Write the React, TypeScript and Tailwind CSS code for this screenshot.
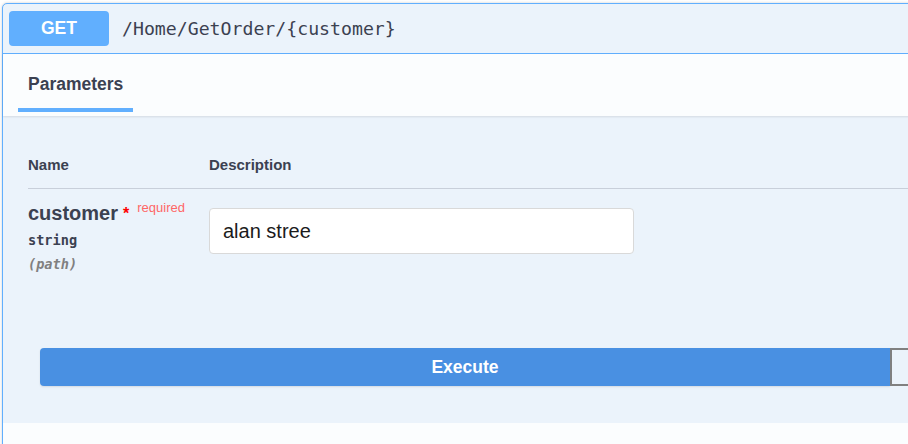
const sans = { fontFamily: '"Liberation Sans", Arial, sans-serif' }

export default function App() {
  return (
    <div className="w-[908px] h-[444px] overflow-hidden bg-white font-['Liberation_Sans',Arial,sans-serif]">
      <div className="ml-[2px] mt-[3px] w-[1000px] rounded-tl-[5px] border border-[#61affe] bg-[#ebf3fb] shadow-[0_0_3px_rgba(0,0,0,0.19)]">
        {/* Summary */}
        <div className="flex h-[50px] items-center border-b border-[#61affe] px-[6px]">
          <div className="flex h-[35px] w-[100px] items-center justify-center rounded-[4px] bg-[#61affe] text-[17.5px] font-bold text-white">
            GET
          </div>
          <span className="ml-[13px] font-['DejaVu_Sans_Mono',monospace] text-[18.2px] text-[#3b4151]">
            /Home/GetOrder/{'{customer}'}
          </span>
        </div>

        {/* Tab header */}
        <div className="relative h-[62px] bg-[#fbfdfe] px-[15px] shadow-[0_1px_2px_rgba(0,0,0,0.1)]">
          <div className="flex w-[115px] flex-col pt-[20px]">
            <span className="pl-[10px] text-[17.5px] leading-[20px] font-bold text-[#3b4151]">Parameters</span>
            <div className="mt-[14px] h-[4px] bg-[#61affe]" />
          </div>
        </div>

        {/* Parameters table */}
        <div className="pt-[40px] pl-[25px] text-[#3b4151]">
          <div className="flex h-[33px] border-b border-[#c8cfda] text-[15px] leading-[18px] font-bold">
            <div className="w-[181px]">Name</div>
            <div>Description</div>
          </div>
          <div className="flex h-[100px]">
            <div className="w-[181px] pt-[12px]">
              <div className="flex items-start">
                <span className="text-[20px] leading-[24px] font-bold">customer</span>
                <span className="ml-[5px] mt-[4px] text-[16px] leading-[18px] font-bold text-[#ff0000]">*</span>
                <span className="ml-[8px] -mt-[1px] text-[13px] leading-[16px] text-[#ff6666]">required</span>
              </div>
              <div className="mt-[7px] font-['DejaVu_Sans_Mono',monospace] text-[13.6px] leading-[16px] font-bold">
                string
              </div>
              <div className="mt-[8px] font-['DejaVu_Sans_Mono',monospace] text-[13.6px] leading-[16px] font-bold italic text-[#808080]">
                (path)
              </div>
            </div>
            <div className="pt-[19px]">
              <input
                defaultValue="alan stree"
                style={sans}
                className="h-[46px] w-[425px] rounded-[4px] border border-[#d9d9d9] bg-white pl-[13px] text-[20px] text-[#1b1b1b] outline-none"
              />
            </div>
          </div>
        </div>

        {/* Execute */}
        <div className="flex pt-[59px] pb-[37px] pl-[37px]">
          <button className="h-[38px] w-[850px] rounded-l-[4px] bg-[#4990e2] text-[17.5px] font-bold text-white shadow-[0_1px_2px_rgba(0,0,0,0.1)]">
            Execute
          </button>
          <button className="h-[38px] w-[100px] border-2 border-[#808080] bg-transparent" />
        </div>

        <div className="h-[40px] bg-[#fbfdfe]" />
      </div>
    </div>
  )
}
